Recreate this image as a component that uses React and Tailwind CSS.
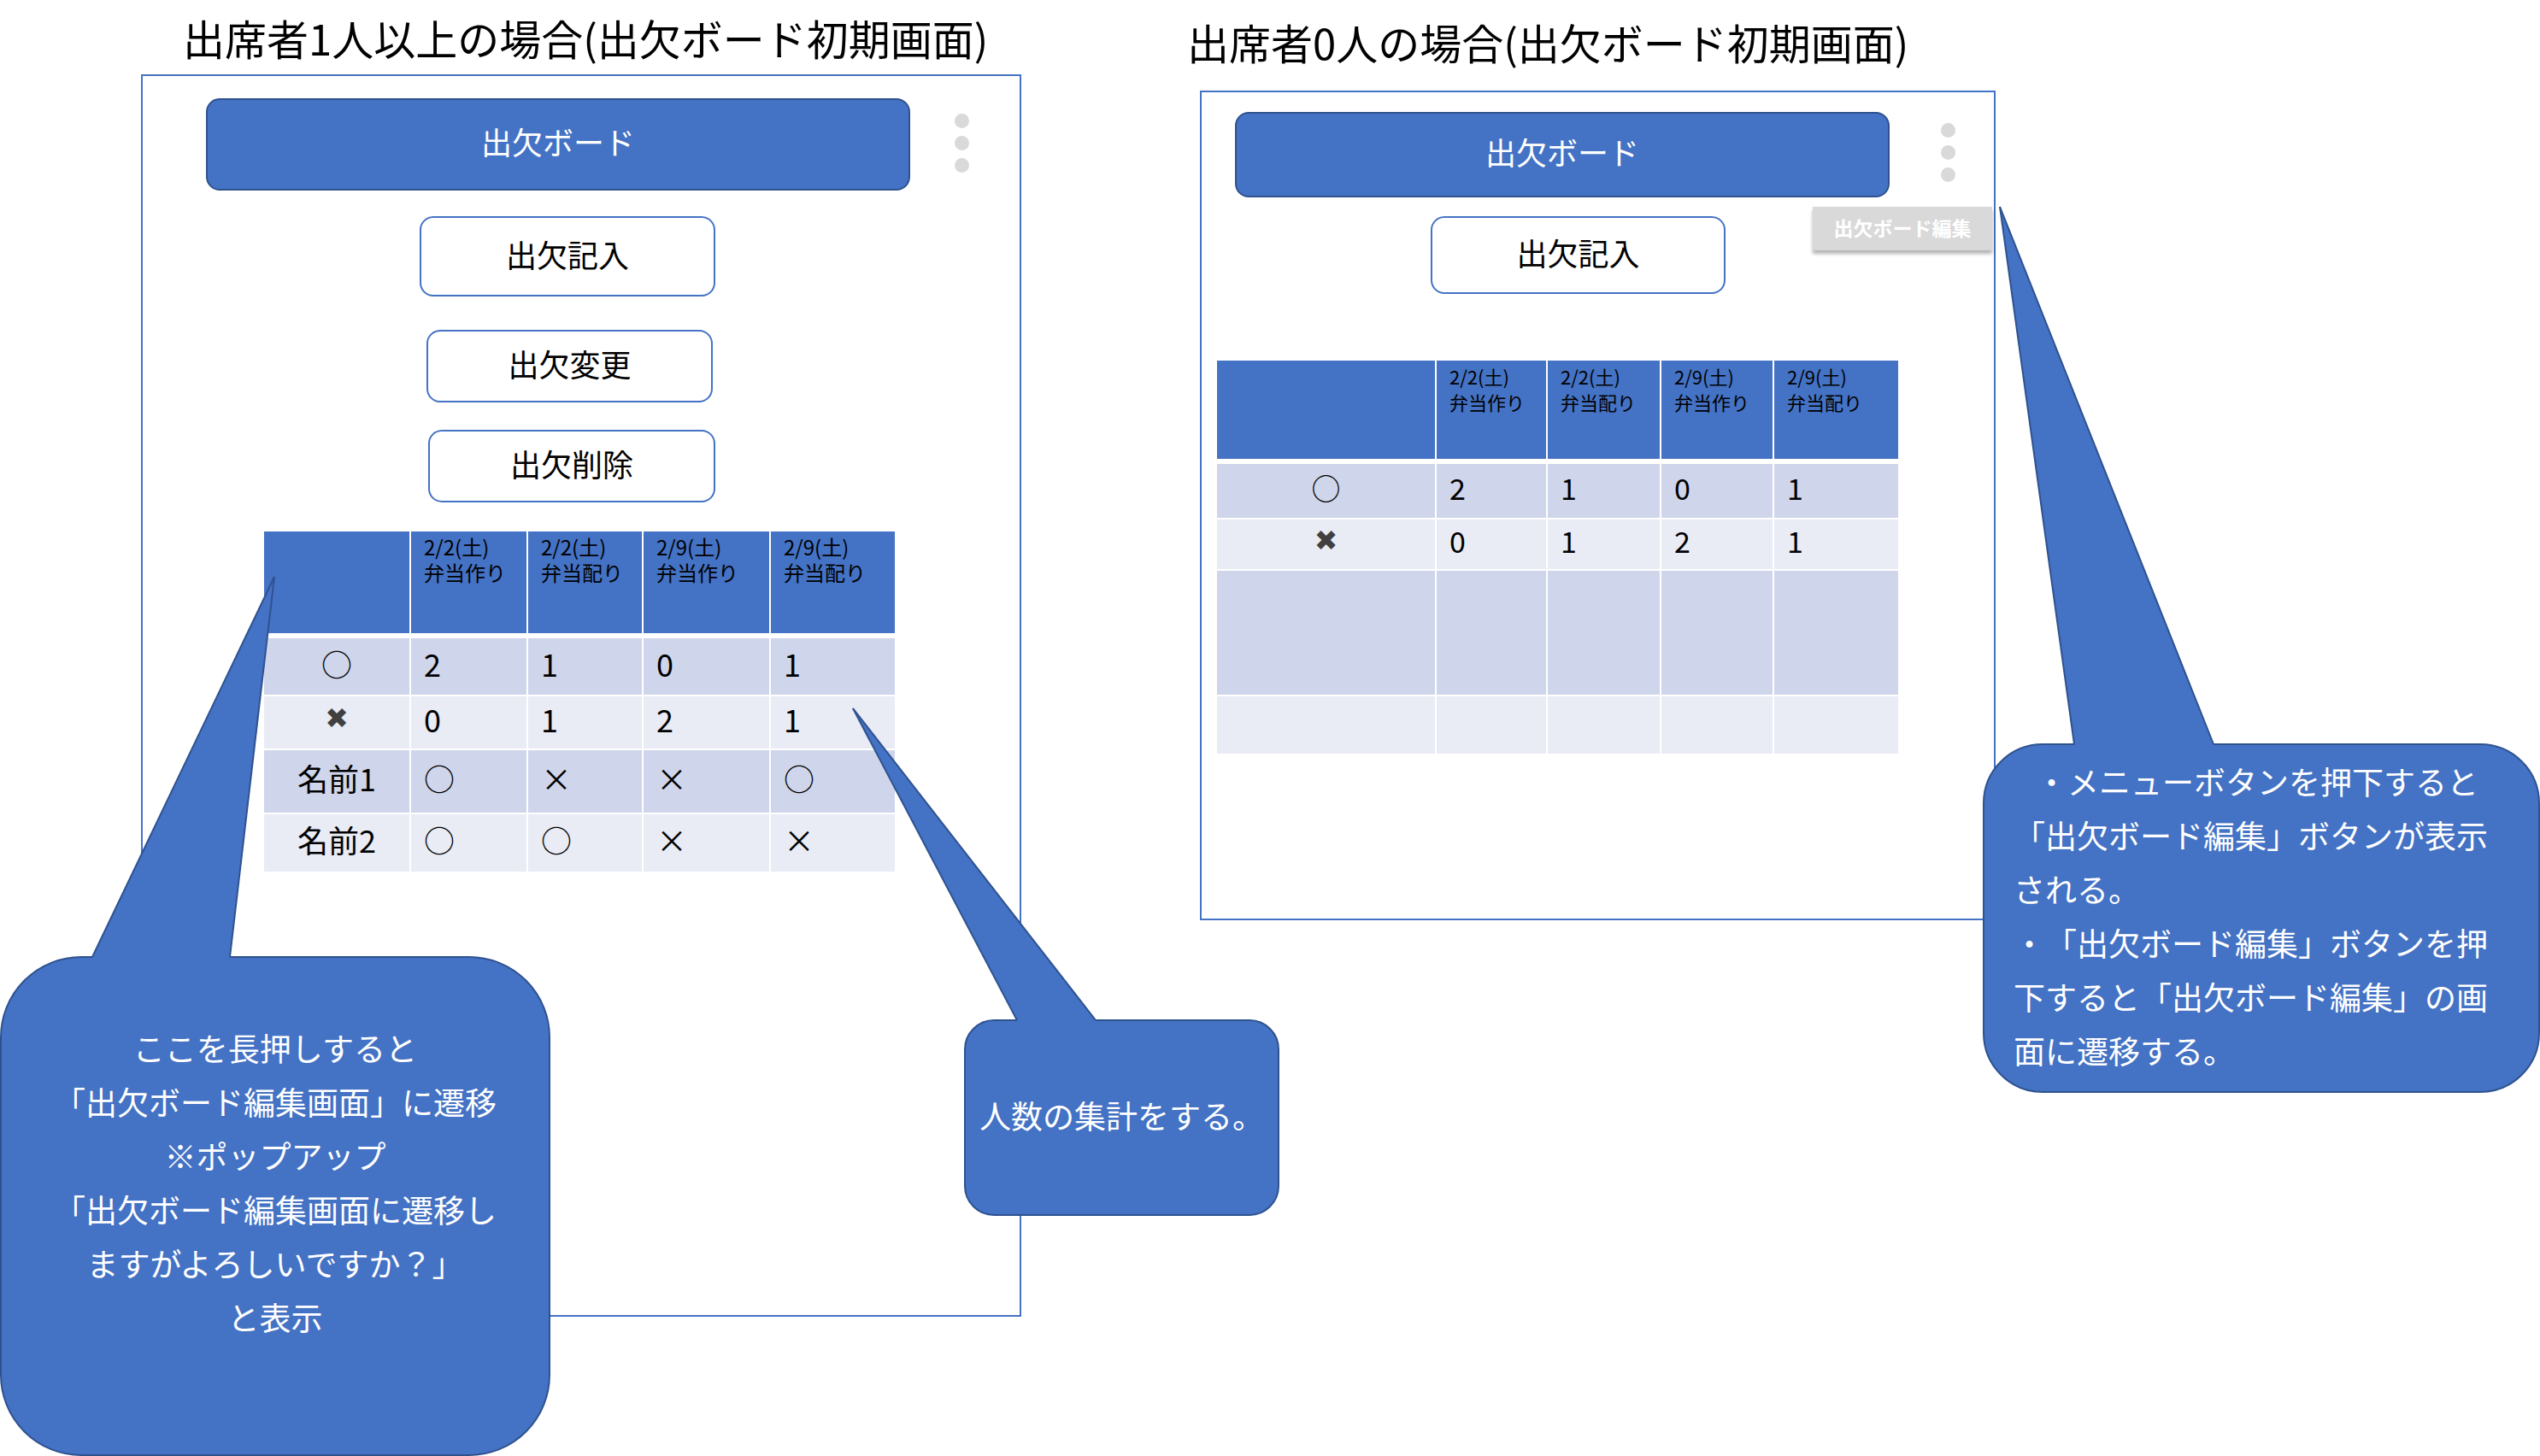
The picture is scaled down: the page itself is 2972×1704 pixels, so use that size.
const t1 = {
  cols: ['w-[170px]', 'w-[137px]', 'w-[135px]', 'w-[149px]', 'w-[147px]'],
  head: 'h-[119px] text-[24px]',
  text: 'text-[36px]',
  rows: [
    { h: 'h-[72px] border-t-[6px]', bg: 'bg-[#CFD5EA]', cells: ['○', '2', '1', '0', '1'] },
    { h: 'h-[63px] border-t-2', bg: 'bg-[#E9EBF5]', cells: ['✖', '0', '1', '2', '1'] },
    { h: 'h-[75px] border-t-2', bg: 'bg-[#CFD5EA]', cells: ['名前1', '○', '×', '×', '○'] },
    { h: 'h-[69px] border-t-2', bg: 'bg-[#E9EBF5]', cells: ['名前2', '○', '○', '×', '×'] },
  ],
}

const t2 = {
  cols: ['w-[255px]', 'w-[130px]', 'w-[133px]', 'w-[132px]', 'w-[147px]'],
  head: 'h-[115px] text-[22px]',
  text: 'text-[34px]',
  rows: [
    { h: 'h-[69px] border-t-[6px]', bg: 'bg-[#CFD5EA]', cells: ['○', '2', '1', '0', '1'] },
    { h: 'h-[60px] border-t-2', bg: 'bg-[#E9EBF5]', cells: ['✖', '0', '1', '2', '1'] },
    { h: 'h-[147px] border-t-2', bg: 'bg-[#CFD5EA]', cells: ['', '', '', '', ''] },
    { h: 'h-[69px] border-t-2', bg: 'bg-[#E9EBF5]', cells: ['', '', '', '', ''] },
  ],
}

const heads = [
  null,
  ['2/2(土)', '弁当作り'],
  ['2/2(土)', '弁当配り'],
  ['2/9(土)', '弁当作り'],
  ['2/9(土)', '弁当配り'],
]

function Cell({ value }) {
  if (value === '✖') {
    return <span className="font-['DejaVu_Sans',sans-serif] text-[33px] text-[#404040]">✖</span>
  }
  return <span>{value}</span>
}

function Board({ t, className }) {
  return (
    <div className={`flex flex-col text-black ${className}`}>
      {/* header */}
      <div className={`flex bg-[#4472C4] ${t.head}`}>
        {heads.map((h, i) => (
          <div key={i} className={`${t.cols[i]} ${i ? 'border-l-2 border-white' : ''} flex flex-col pl-[15px] pt-[3px] leading-[30px]`}>
            {h && <><span>{h[0]}</span><span>{h[1]}</span></>}
          </div>
        ))}
      </div>
      {t.rows.map((r, ri) => (
        <div key={ri} className={`flex border-white ${r.h} ${r.bg} ${t.text}`}>
          {r.cells.map((c, i) => (
            <div key={i} className={`${t.cols[i]} flex items-center pb-[9px] ${i ? 'border-l-2 border-white pl-[15px]' : 'justify-center'}`}>
              <Cell value={c} />
            </div>
          ))}
        </div>
      ))}
    </div>
  )
}

function Dots({ className }) {
  return (
    <div className={`flex flex-col gap-[9px] ${className}`}>
      <span className="w-[17px] h-[17px] rounded-full bg-[#D9D9D9]" />
      <span className="w-[17px] h-[17px] rounded-full bg-[#D9D9D9]" />
      <span className="w-[17px] h-[17px] rounded-full bg-[#D9D9D9]" />
    </div>
  )
}

function OutlineBtn({ className, children }) {
  return (
    <div className={`flex items-center justify-center pb-[7px] rounded-[16px] border-2 border-[#4472C4] bg-white text-[36px] text-black ${className}`}>
      {children}
    </div>
  )
}

function BoardBtn({ className }) {
  return (
    <div className={`flex items-center justify-center pb-[8px] rounded-[16px] border-2 border-[#2F528F] bg-[#4472C4] text-[36px] text-white ${className}`}>
      出欠ボード
    </div>
  )
}

// tail drawn from callout top-left corner; y < 0 goes up
function Tail({ tip, a, b }) {
  return (
    <svg className="absolute -left-[2px] -top-[2px] overflow-visible" width="1" height="1">
      <polygon points={`${tip[0]},${tip[1]} ${a},0 ${a},5 ${b},5 ${b},0`} fill="#4472C4" />
      <line x1={tip[0]} y1={tip[1]} x2={a} y2="1" stroke="#2F528F" strokeWidth="2" />
      <line x1={tip[0]} y1={tip[1]} x2={b} y2="1" stroke="#2F528F" strokeWidth="2" />
    </svg>
  )
}

export default function App() {
  return (
    <div className="relative w-[2972px] h-[1704px] overflow-hidden bg-white [text-spacing-trim:space-all] font-['Noto_Sans_CJK_JP','Noto_Sans',sans-serif]">
      {/* titles */}
      <div className="absolute left-[214px] top-[19px] text-[49px] leading-none text-black whitespace-nowrap">
        出席者1人以上の場合(出欠ボード初期画面)
      </div>
      <div className="absolute left-[1389px] top-[24px] text-[49px] leading-none text-black whitespace-nowrap">
        出席者0人の場合(出欠ボード初期画面)
      </div>

      {/* 出席者1人以上 */}
      <div className="absolute left-[165px] top-[87px] w-[1030px] h-[1454px] border-2 border-[#4472C4] flex flex-col items-start">
        <div className="flex items-start ml-[74px] mt-[26px]">
          <BoardBtn className="w-[824px] h-[108px]" />
          <Dots className="ml-[52px] mt-[18px]" />
        </div>
        <OutlineBtn className="ml-[324px] mt-[30px] w-[346px] h-[94px]">出欠記入</OutlineBtn>
        <OutlineBtn className="ml-[332px] mt-[39px] w-[335px] h-[85px]">出欠変更</OutlineBtn>
        <OutlineBtn className="ml-[334px] mt-[32px] w-[336px] h-[85px]">出欠削除</OutlineBtn>
        <Board t={t1} className="ml-[142px] mt-[34px]" />
      </div>

      {/* 出席者0人 */}
      <div className="absolute left-[1404px] top-[106px] w-[931px] h-[971px] border-2 border-[#4472C4] flex flex-col items-start">
        <div className="flex items-start ml-[39px] mt-[23px]">
          <BoardBtn className="w-[766px] h-[100px]" />
          <Dots className="ml-[60px] mt-[13px]" />
        </div>
        <OutlineBtn className="ml-[268px] mt-[22px] w-[345px] h-[91px]">出欠記入</OutlineBtn>
        <Board t={t2} className="ml-[18px] mt-[78px]" />
        {/* menu popup */}
        <div className="absolute left-[715px] top-[134px] w-[210px] h-[51px] flex items-center justify-center pb-[3px] bg-[#D9D9D9] text-white text-[23px] font-bold shadow-[0_4px_4px_rgba(0,0,0,0.3)]">
          出欠ボード編集
        </div>
      </div>

      {/* callouts */}
      <div className="absolute left-0 top-[1119px] w-[644px] h-[585px] rounded-[95px] border-2 border-[#2F528F] bg-[#4472C4] text-white text-[37px] leading-[63px] flex flex-col items-center pt-[74px]">
        <Tail tip={[321, -444]} a={108} b={269} />
        <span>ここを長押しすると</span>
        <span>「出欠ボード編集画面」に遷移</span>
        <span>※ポップアップ</span>
        <span>「出欠ボード編集画面に遷移し</span>
        <span>ますがよろしいですか？」</span>
        <span>と表示</span>
      </div>

      <div className="absolute left-[1128px] top-[1193px] w-[369px] h-[230px] rounded-[35px] border-2 border-[#2F528F] bg-[#4472C4] text-white text-[37px] flex items-center justify-center pb-[4px] whitespace-nowrap">
        <Tail tip={[-130, -364]} a={62} b={154} />
        人数の集計をする。
      </div>

      <div className="absolute left-[2320px] top-[870px] w-[652px] h-[409px] rounded-[70px] border-2 border-[#2F528F] bg-[#4472C4] text-white text-[37px] leading-[63px] flex flex-col justify-center pl-[34px] pb-[6px] whitespace-nowrap">
        <Tail tip={[20, -628]} a={107} b={270} />
        <span className="pl-[26px]">・メニューボタンを押下すると</span>
        <span>「出欠ボード編集」ボタンが表示</span>
        <span>される。</span>
        <span>・「出欠ボード編集」ボタンを押</span>
        <span>下すると「出欠ボード編集」の画</span>
        <span>面に遷移する。</span>
      </div>
    </div>
  )
}
